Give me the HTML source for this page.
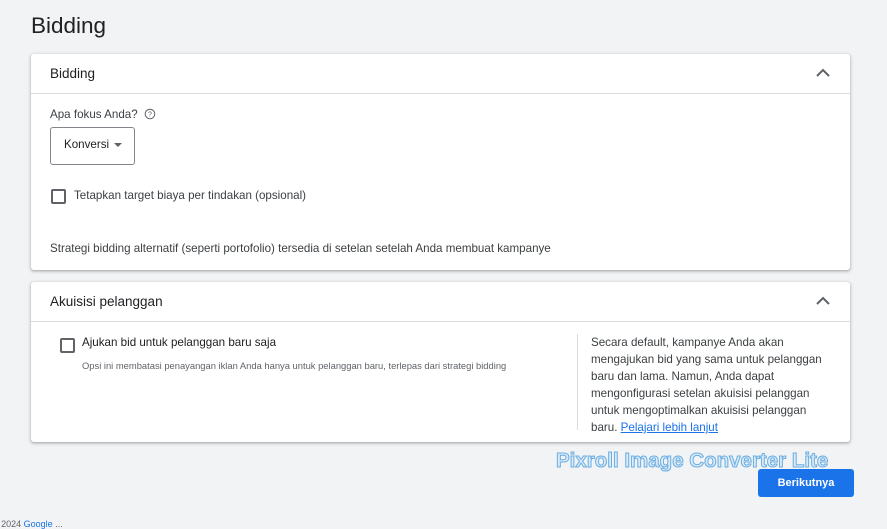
<!DOCTYPE html>
<html><head><meta charset="utf-8"><style>
body{margin:0;width:887px;height:526px;background:#f1f3f4;font-family:"Liberation Sans",sans-serif;color:#3c4043;position:relative;overflow:hidden}
.abs{position:absolute}
.card{position:absolute;left:31px;width:819px;background:#fff;border-radius:3px;box-shadow:0 1px 2px rgba(60,64,67,.3),0 1px 3px 1px rgba(60,64,67,.15)}
.hdr{height:39px;border-bottom:1px solid #dadce0;position:relative}
.hdr span{position:absolute;left:19px;top:12px;font-size:13.5px;color:#202124}
.chev{position:absolute;right:20px;top:14px}
.cb{position:absolute;width:11px;height:11px;border:2px solid #5f6368;border-radius:2px}
.t{font-size:11.6px}
</style></head><body>
<div class="abs" style="left:31px;top:13px;font-size:22.5px;color:#202124">Bidding</div>
<div class="card" style="top:54px;height:216px">
 <div class="hdr"><span>Bidding</span><svg class="chev" width="14" height="10" viewBox="0 0 14 10"><path d="M1 8 L7 2 L13 8" fill="none" stroke="#5f6368" stroke-width="2"/></svg></div>
 <div class="abs t" style="left:19px;top:54px">Apa fokus Anda?</div>
 <svg class="abs" style="left:113px;top:54px" width="12" height="12" viewBox="0 0 12 12"><circle cx="6" cy="6" r="4.8" fill="none" stroke="#5f6368" stroke-width="1"/><text x="6" y="8.5" font-size="7" text-anchor="middle" fill="#5f6368" font-family="Liberation Sans">?</text></svg>
 <div class="abs" style="left:19px;top:73px;width:83px;height:36px;border:1px solid #80868b;border-radius:3px"></div>
 <div class="abs t" style="left:33px;top:84px;color:#202124">Konversi</div>
 <svg class="abs" style="left:83px;top:89px" width="8" height="5"><path d="M0 0 L8 0 L4 4z" fill="#5f6368"/></svg>
 <div class="cb" style="left:20px;top:135px"></div>
 <div class="abs t" style="left:43px;top:135px">Tetapkan target biaya per tindakan (opsional)</div>
 <div class="abs t" style="left:19px;top:188px">Strategi bidding alternatif (seperti portofolio) tersedia di setelan setelah Anda membuat kampanye</div>
</div>
<div class="card" style="top:282px;height:160px">
 <div class="hdr"><span>Akuisisi pelanggan</span><svg class="chev" width="14" height="10" viewBox="0 0 14 10"><path d="M1 8 L7 2 L13 8" fill="none" stroke="#5f6368" stroke-width="2"/></svg></div>
 <div class="cb" style="left:29px;top:56px"></div>
 <div class="abs t" style="left:51px;top:54px;color:#202124">Ajukan bid untuk pelanggan baru saja</div>
 <div class="abs" style="left:51px;top:78px;font-size:9.4px;color:#5f6368">Opsi ini membatasi penayangan iklan Anda hanya untuk pelanggan baru, terlepas dari strategi bidding</div>
 <div class="abs" style="left:546px;top:52px;width:1px;height:96px;background:#dadce0"></div>
 <div class="abs t" style="left:560px;top:52px;width:236px;line-height:17px;color:#3c4043">Secara default, kampanye Anda akan mengajukan bid yang sama untuk pelanggan baru dan lama. Namun, Anda dapat mengonfigurasi setelan akuisisi pelanggan untuk mengoptimalkan akuisisi pelanggan baru. <span style="color:#1a73e8;text-decoration:underline">Pelajari lebih lanjut</span></div>
</div>
<div class="abs" style="left:556px;top:449px;font-size:20.5px;font-weight:bold;color:#dbeafa;-webkit-text-stroke:1px #6aaee0">Pixroll Image Converter Lite</div>
<div class="abs" style="left:758px;top:469px;width:96px;height:28px;background:#1a73e8;border-radius:3px;color:#fff;font-size:11px;font-weight:bold;text-align:center;line-height:28px">Berikutnya</div>
<div class="abs" style="left:-8px;top:519px;font-size:9px;color:#5f6368">© 2024 <span style="color:#1a73e8">Google</span> ...</div>
</body></html>
